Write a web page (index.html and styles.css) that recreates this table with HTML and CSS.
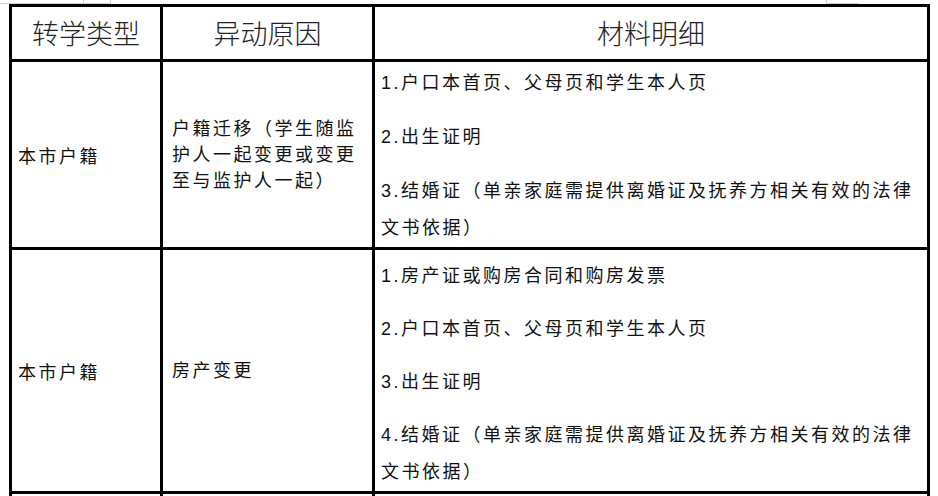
FILE: index.html
```html
<!DOCTYPE html>
<html lang="zh-CN">
<head>
<meta charset="utf-8">
<title>转学材料</title>
<link rel="stylesheet" href="styles.css">
</head>
<body>
<div class="strip">
  <span class="frag frag-a"></span>
  <span class="frag frag-b"></span>
  <span class="frag frag-c"></span>
</div>
<div class="wrap">
<table class="sheet">
  <colgroup>
    <col class="c1">
    <col class="c2">
    <col class="c3">
  </colgroup>
  <thead>
    <tr class="head">
      <th>转学类型</th>
      <th>异动原因</th>
      <th>材料明细</th>
    </tr>
  </thead>
  <tbody>
    <tr class="row1">
      <td class="type">本市户籍</td>
      <td class="reason">户籍迁移（学生随监护人一起变更或变更至与监护人一起）</td>
      <td class="items">
        <p>1.户口本首页、父母页和学生本人页</p>
        <p>2.出生证明</p>
        <p>3.结婚证（单亲家庭需提供离婚证及抚养方相关有效的法律文书依据）</p>
      </td>
    </tr>
    <tr class="row2">
      <td class="type">本市户籍</td>
      <td class="reason">房产变更</td>
      <td class="items">
        <p>1.房产证或购房合同和购房发票</p>
        <p>2.户口本首页、父母页和学生本人页</p>
        <p>3.出生证明</p>
        <p>4.结婚证（单亲家庭需提供离婚证及抚养方相关有效的法律文书依据）</p>
      </td>
    </tr>
    <tr class="row3">
      <td></td>
      <td></td>
      <td></td>
    </tr>
  </tbody>
</table>
</div>
</body>
</html>
```

FILE: styles.css
```css
html, body {
  margin: 0;
  padding: 0;
  background: #ffffff;
}

body {
  font-family: "Liberation Sans", "Noto Sans CJK SC", sans-serif;
  color: #111;
  overflow: hidden;
  height: 496px;
}

.strip {
  display: flex;
  height: 4px;
}

.frag {
  display: block;
  box-sizing: border-box;
  height: 4px;
  border-bottom: 1px solid #d2d2d2;
}

.frag-a {
  width: 84px;
  border-right: 1px solid #d2d2d2;
}

.frag-b {
  width: 27px;
  border-right: 1px solid #d2d2d2;
}

.frag-c {
  width: 32px;
  margin-left: 715px;
  border-left: 1px solid #d2d2d2;
}

.wrap {
  padding-left: 9px;
}

.sheet {
  border-collapse: separate;
  border-spacing: 0;
  border-top: 3px solid #000;
  border-left: 3px solid #000;
  table-layout: fixed;
  width: 921px;
}

.c1 { width: 151px; }
.c2 { width: 212px; }
.c3 { width: 555px; }

.sheet th,
.sheet td {
  border-right: 3px solid #000;
  border-bottom: 3px solid #000;
  padding: 0;
  vertical-align: middle;
  text-align: left;
}

.sheet .head th {
  height: 52px;
  font-family: "Noto Sans CJK SC", sans-serif;
  font-weight: 300;
  font-size: 27px;
  color: #222;
  text-align: center;
  line-height: 30px;
}

.sheet td {
  font-size: 18px;
  letter-spacing: 2.5px;
}

.sheet .type {
  padding-left: 6px;
}

.sheet .reason {
  padding-left: 9px;
  padding-right: 6px;
  line-height: 26px;
}

.sheet .items {
  padding-left: 6px;
  padding-right: 2px;
  line-height: 37px;
  vertical-align: top;
}

.items p {
  margin: 0 0 17px 0;
}

.items p:last-child {
  margin-bottom: 0;
}

.row1 td {
  height: 185px;
}

.sheet .row1 .items {
  padding-top: 3px;
  height: 182px;
}

.row2 td {
  height: 241px;
}

.sheet .row2 .items {
  padding-top: 8px;
  height: 233px;
}

.sheet .row2 .items p {
  margin-bottom: 16px;
}

.sheet .row2 .items p:last-child {
  margin-bottom: 0;
}

.sheet .row3 td {
  height: 3px;
  border-bottom: 0;
}
```
